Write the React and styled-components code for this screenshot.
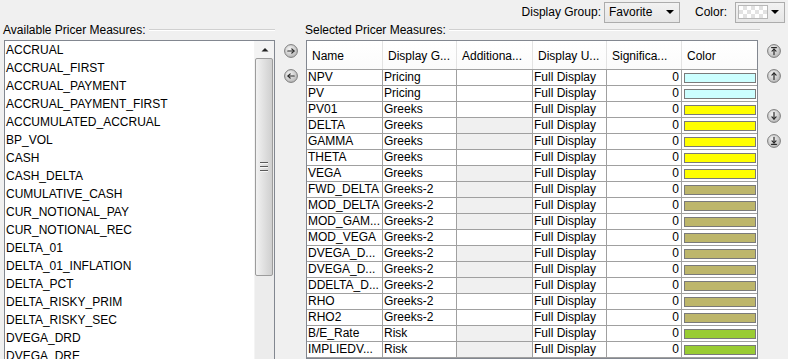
import React from "react";
import styled, { createGlobalStyle } from "styled-components";

const GlobalStyle = createGlobalStyle`
  html, body {
    margin: 0;
    padding: 0;
    background: #f0f0f0;
    font-family: "Liberation Sans", Arial, sans-serif;
    font-size: 12px;
    color: #000;
  }
`;

const available = [
  "ACCRUAL",
  "ACCRUAL_FIRST",
  "ACCRUAL_PAYMENT",
  "ACCRUAL_PAYMENT_FIRST",
  "ACCUMULATED_ACCRUAL",
  "BP_VOL",
  "CASH",
  "CASH_DELTA",
  "CUMULATIVE_CASH",
  "CUR_NOTIONAL_PAY",
  "CUR_NOTIONAL_REC",
  "DELTA_01",
  "DELTA_01_INFLATION",
  "DELTA_PCT",
  "DELTA_RISKY_PRIM",
  "DELTA_RISKY_SEC",
  "DVEGA_DRD",
  "DVEGA_DRE",
];

const swatch = {
  pricing: "#ccffff",
  greeks: "#ffff00",
  greeks2: "#bdb66b",
  risk: "#99cc33",
};

const selected = [
  { name: "NPV", group: "Pricing", color: swatch.pricing },
  { name: "PV", group: "Pricing", color: swatch.pricing },
  { name: "PV01", group: "Greeks", color: swatch.greeks },
  { name: "DELTA", group: "Greeks", color: swatch.greeks, grey: true },
  { name: "GAMMA", group: "Greeks", color: swatch.greeks, grey: true },
  { name: "THETA", group: "Greeks", color: swatch.greeks },
  { name: "VEGA", group: "Greeks", color: swatch.greeks, grey: true },
  { name: "FWD_DELTA", group: "Greeks-2", color: swatch.greeks2, grey: true },
  { name: "MOD_DELTA", group: "Greeks-2", color: swatch.greeks2, grey: true },
  { name: "MOD_GAM...", group: "Greeks-2", color: swatch.greeks2, grey: true },
  { name: "MOD_VEGA", group: "Greeks-2", color: swatch.greeks2 },
  { name: "DVEGA_D...", group: "Greeks-2", color: swatch.greeks2, grey: true },
  { name: "DVEGA_D...", group: "Greeks-2", color: swatch.greeks2, grey: true },
  { name: "DDELTA_D...", group: "Greeks-2", color: swatch.greeks2, grey: true },
  { name: "RHO", group: "Greeks-2", color: swatch.greeks2 },
  { name: "RHO2", group: "Greeks-2", color: swatch.greeks2 },
  { name: "B/E_Rate", group: "Risk", color: swatch.risk, grey: true },
  { name: "IMPLIEDV...", group: "Risk", color: swatch.risk, grey: true },
];

const columns = ["Name", "Display G...", "Additiona...", "Display U...", "Significa...", "Color"];
const COLS = "76px 74px 76px 74px 75px 75px";

function RoundButton({ kind }) {
  const id = "g-" + kind;
  const s = { stroke: "#2a2a2a", strokeWidth: 1.2, fill: "none", strokeLinecap: "round", strokeLinejoin: "round" };
  return (
    <IconButton>
      <svg width="14" height="14" viewBox="0 0 14 14">
        <defs>
          <radialGradient id={id} cx="40%" cy="35%" r="70%">
            <stop offset="0%" stopColor="#f4f4f4" />
            <stop offset="100%" stopColor="#b4b4b4" />
          </radialGradient>
        </defs>
        <circle cx="7" cy="7" r="6.4" fill={`url(#${id})`} stroke="#7c7c7c" strokeWidth="1" />
        {kind === "right" && (
          <>
            <path d="M3.8 7 H10" {...s} />
            <path d="M7.8 4.8 L10 7 L7.8 9.2" {...s} />
          </>
        )}
        {kind === "left" && (
          <>
            <path d="M4 7 H10.2" {...s} />
            <path d="M6.2 4.8 L4 7 L6.2 9.2" {...s} />
          </>
        )}
        {kind === "top" && (
          <>
            <path d="M4.6 3.6 H9.4" {...s} />
            <path d="M7 5.2 V10.6" {...s} />
            <path d="M5 7.2 L7 5.2 L9 7.2" {...s} />
          </>
        )}
        {kind === "up" && (
          <>
            <path d="M7 4 V10.4" {...s} />
            <path d="M4.9 6.1 L7 4 L9.1 6.1" {...s} />
          </>
        )}
        {kind === "down" && (
          <>
            <path d="M7 3.6 V10" {...s} />
            <path d="M4.9 7.9 L7 10 L9.1 7.9" {...s} />
          </>
        )}
        {kind === "bottom" && (
          <>
            <path d="M7 3.4 V8.8" {...s} />
            <path d="M5 6.8 L7 8.8 L9 6.8" {...s} />
            <path d="M4.6 10.4 H9.4" {...s} />
          </>
        )}
      </svg>
    </IconButton>
  );
}

export default function App() {
  return (
    <>
      <GlobalStyle />
      <Page>
        <TopBar>
          <Label>Display Group:</Label>
          <Combo>
            <span>Favorite</span>
            <Caret />
          </Combo>
          <Label style={{ marginLeft: 15 }}>Color:</Label>
          <ColorCombo>
            <Checker />
            <Caret />
          </ColorCombo>
        </TopBar>

        <Main>
          <LeftPanel>
            <GroupTitle>
              <span>Available Pricer Measures:</span>
              <Rule />
            </GroupTitle>
            <ListBox>
              <Items>
                {available.map((item) => (
                  <Item key={item}>{item}</Item>
                ))}
              </Items>
              <ScrollBar>
                <ScrollArrow>
                  <svg width="8" height="5" viewBox="0 0 8 5">
                    <path d="M0.5 4.5 L4 1 L7.5 4.5 Z" fill="#222" />
                  </svg>
                </ScrollArrow>
                <Thumb>
                  <Grip />
                  <Grip />
                  <Grip />
                </Thumb>
                <Track />
              </ScrollBar>
            </ListBox>
          </LeftPanel>

          <ButtonColumn $width={27}>
            <RoundButton kind="right" />
            <RoundButton kind="left" />
          </ButtonColumn>

          <RightPanel>
            <GroupTitle>
              <span>Selected Pricer Measures:</span>
              <Rule />
            </GroupTitle>
            <Table>
              <HeaderRow>
                {columns.map((c) => (
                  <HeaderCell key={c}>{c}</HeaderCell>
                ))}
              </HeaderRow>
              {selected.map((r, i) => (
                <Row key={i}>
                  <Cell>{r.name}</Cell>
                  <Cell>{r.group}</Cell>
                  <Cell $grey={r.grey} />
                  <Cell>Full Display</Cell>
                  <Cell $right>0</Cell>
                  <ColorCell>
                    <Swatch $color={r.color} />
                  </ColorCell>
                </Row>
              ))}
            </Table>
          </RightPanel>

          <ButtonColumn $width={28}>
            <RoundButton kind="top" />
            <RoundButton kind="up" />
            <Spacer />
            <RoundButton kind="down" />
            <RoundButton kind="bottom" />
          </ButtonColumn>
        </Main>
      </Page>
    </>
  );
}

const Page = styled.div`
  width: 788px;
  height: 359px;
  overflow: hidden;
  display: flex;
  flex-direction: column;
`;

const TopBar = styled.div`
  height: 23px;
  display: flex;
  align-items: center;
  justify-content: flex-end;
  padding-right: 3px;
  flex-shrink: 0;
`;

const Label = styled.span`
  margin-right: 3px;
  white-space: nowrap;
`;

const Combo = styled.div`
  box-sizing: border-box;
  width: 76px;
  height: 21px;
  margin-top: 1px;
  display: flex;
  align-items: center;
  justify-content: space-between;
  padding: 0 5px 0 4px;
  border: 1px solid #acacac;
  background: linear-gradient(#f2f2f2, #e6e6e6);
`;

const ColorCombo = styled(Combo)`
  width: 50px;
  margin-left: 5px;
  padding: 0 5px 0 2px;
`;

const Caret = styled.span`
  width: 0;
  height: 0;
  border-left: 4px solid transparent;
  border-right: 4px solid transparent;
  border-top: 4px solid #000;
`;

const Checker = styled.span`
  box-sizing: border-box;
  width: 30px;
  height: 14px;
  border: 1px solid #b8b8b8;
  background-color: #ffffff;
  background-image: linear-gradient(45deg, #e2e2e2 25%, transparent 25%, transparent 75%, #e2e2e2 75%),
    linear-gradient(45deg, #e2e2e2 25%, transparent 25%, transparent 75%, #e2e2e2 75%);
  background-size: 8px 8px;
  background-position: 0 0, 4px 4px;
`;

const Main = styled.div`
  flex: 1;
  display: flex;
  min-height: 0;
`;

const LeftPanel = styled.div`
  width: 277px;
  display: flex;
  flex-direction: column;
  flex-shrink: 0;
`;

const RightPanel = styled.div`
  width: 456px;
  display: flex;
  flex-direction: column;
  flex-shrink: 0;
`;

const GroupTitle = styled.div`
  height: 14px;
  line-height: 14px;
  display: flex;
  align-items: center;
  padding-left: 3px;
  margin-bottom: 3px;
  white-space: nowrap;

  ${RightPanel} & {
    padding-left: 1px;
  }
`;

const Rule = styled.div`
  flex: 1;
  height: 1px;
  margin-left: 3px;
  margin-right: 2px;
  background: #d0d0d0;
  border-bottom: 1px solid #ffffff;

  ${RightPanel} & {
    margin-right: 0;
  }
`;

const ListBox = styled.div`
  box-sizing: border-box;
  width: 271px;
  margin-left: 4px;
  height: 330px;
  display: flex;
  border: 1px solid #828790;
  background: #ffffff;
`;

const Items = styled.div`
  flex: 1;
  padding-left: 1px;
`;

const Item = styled.div`
  height: 18px;
  line-height: 18px;
  white-space: nowrap;
`;

const ScrollBar = styled.div`
  width: 19px;
  display: flex;
  flex-direction: column;
  background: #ededed;
  border-left: 1px solid #f4f4f4;
`;

const ScrollArrow = styled.div`
  height: 17px;
  display: flex;
  align-items: center;
  justify-content: center;
  background: #f3f3f3;
`;

const Thumb = styled.div`
  box-sizing: border-box;
  height: 218px;
  margin: 0 1px 0 0;
  display: flex;
  flex-direction: column;
  align-items: center;
  justify-content: center;
  gap: 2px;
  border: 1px solid #9c9c9c;
  border-radius: 2px;
  background: linear-gradient(90deg, #f2f2f2, #e0e0e0 50%, #cfcfcf);
`;

const Grip = styled.div`
  width: 8px;
  height: 1px;
  background: #5a5a5a;
  border-bottom: 1px solid #f6f6f6;
`;

const Track = styled.div`
  flex: 1;
  background: #ececec;
`;

const ButtonColumn = styled.div`
  width: ${(p) => p.$width}px;
  flex-shrink: 0;
  display: flex;
  flex-direction: column;
  align-items: center;
  padding-top: 21px;
  gap: 11px;
`;

const Spacer = styled.div`
  height: 15px;
  margin: -11px 0 0 0;
`;

const IconButton = styled.div`
  width: 14px;
  height: 14px;
  display: flex;

  svg {
    display: block;
  }
`;

const Table = styled.div`
  box-sizing: border-box;
  width: 452px;
  margin-left: 2px;
  border: 1px solid #828790;
  background: #ffffff;
`;

const HeaderRow = styled.div`
  display: grid;
  grid-template-columns: ${COLS};
  height: 29px;
  box-sizing: border-box;
  border-bottom: 1px solid #a0a0a0;
  background: linear-gradient(#ffffff, #fbfbfb);
`;

const HeaderCell = styled.div`
  display: flex;
  align-items: center;
  padding-left: 5px;
  padding-top: 2px;
  border-right: 1px solid #e3e3e3;
  white-space: nowrap;
  overflow: hidden;

  &:last-child {
    border-right: none;
  }
`;

const Row = styled.div`
  display: grid;
  grid-template-columns: ${COLS};
  height: 16px;
  box-sizing: border-box;
  border-bottom: 1px solid #a0a0a0;
`;

const Cell = styled.div`
  border-right: 1px solid #a0a0a0;
  padding: 0 2px 0 1px;
  line-height: 15px;
  white-space: nowrap;
  overflow: hidden;
  text-align: ${(p) => (p.$right ? "right" : "left")};
  background: ${(p) => (p.$grey ? "#f0f0f0" : "transparent")};
`;

const ColorCell = styled.div`
  padding: 3px 1px 2px 2px;
  display: flex;
`;

const Swatch = styled.div`
  flex: 1;
  box-sizing: border-box;
  border: 1px solid #7a7a7a;
  background: ${(p) => p.$color};
`;
